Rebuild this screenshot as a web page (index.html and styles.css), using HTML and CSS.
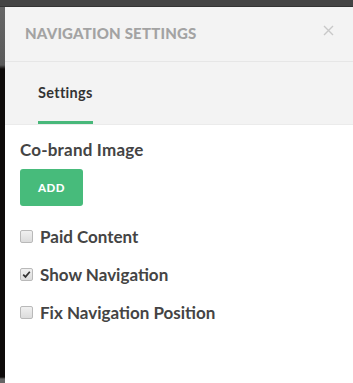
FILE: index.html
```html
<!DOCTYPE html>
<html>
<head>
<meta charset="utf-8">
<link rel="stylesheet" href="styles.css">
</head>
<body>
<div class="app">
  <div class="topbar"></div>
  <div class="main">
    <div class="side"></div>
    <div class="panel">
      <div class="header">
        <div class="title">NAVIGATION SETTINGS</div>
        <div class="close">
          <svg width="11" height="11" viewBox="0 0 11 11"><path d="M1 1L10 10M10 1L1 10" stroke="#c8c8c8" stroke-width="1.4" fill="none"/></svg>
        </div>
      </div>
      <div class="tabs">
        <div class="tab active">Settings</div>
      </div>
      <div class="content">
        <div class="label">Co-brand Image</div>
        <button class="add">ADD</button>
        <label class="check"><span class="box"></span><span>Paid Content</span></label>
        <label class="check"><span class="box checked"><svg width="9" height="9" viewBox="0 0 9 9"><path d="M1.2 4.6L3.5 6.9L7.8 1.8" stroke="#333" stroke-width="1.7" fill="none"/></svg></span><span>Show Navigation</span></label>
        <label class="check"><span class="box"></span><span>Fix Navigation Position</span></label>
      </div>
    </div>
  </div>
</div>
</body>
</html>
```
FILE: styles.css
```css
html, body {
  margin: 0;
  padding: 0;
  background: #111;
}
.app {
  width: 353px;
  height: 383px;
  display: flex;
  flex-direction: column;
  overflow: hidden;
  font-family: "Lato", "Open Sans", sans-serif;
}
.topbar {
  height: 7px;
  background: #444;
  border-bottom: 1px solid #333;
  box-sizing: border-box;
}
.main {
  flex: 1;
  display: flex;
}
.side {
  width: 5px;
  background: linear-gradient(#666 0, #5a5a5a 58px, #0e0b0a 62px, #0e0b0a 370px, #666 372px);
}
.panel {
  flex: 1;
  background: #fff;
  display: flex;
  flex-direction: column;
}
.header {
  height: 55px;
  background: #f3f3f3;
  border-bottom: 1px solid #e6e6e6;
  display: flex;
  align-items: center;
  justify-content: space-between;
  padding: 0 20px;
  box-sizing: border-box;
}
.title {
  font-weight: 900;
  font-size: 15px;
  color: #a3a3a3;
  letter-spacing: 0.2px;
  margin-top: -2px;
}
.close {
  display: flex;
  margin-right: -1px;
  margin-top: -7px;
}
.tabs {
  height: 63px;
  background: #f3f3f3;
  border-bottom: 1px solid #ebebeb;
  box-sizing: border-box;
  display: flex;
  padding-left: 33px;
}
.tab {
  font-weight: 700;
  font-size: 14.5px;
  letter-spacing: 0.3px;
  color: #333;
  display: flex;
  align-items: center;
  border-bottom: 3px solid transparent;
  padding-top: 1px;
}
.tab.active {
  border-bottom-color: #48b87a;
}
.content {
  padding: 15px 15px 0;
  display: flex;
  flex-direction: column;
  align-items: flex-start;
}
.label {
  font-weight: 700;
  font-size: 17px;
  letter-spacing: 0.2px;
  color: #444;
  line-height: 20px;
}
.add {
  margin-top: 9px;
  width: 63px;
  height: 37px;
  background: #47bb7b;
  border: none;
  border-radius: 3px;
  color: #fff;
  font-family: inherit;
  font-weight: 900;
  font-size: 11.5px;
  letter-spacing: 0.4px;
  padding: 0;
}
.check {
  display: flex;
  align-items: center;
  gap: 7px;
  font-weight: 700;
  font-size: 17px;
  color: #444;
  height: 20px;
  margin-top: 20px;
}
.check + .check {
  margin-top: 18px;
}
.box {
  width: 13px;
  height: 13px;
  box-sizing: border-box;
  border: 1px solid #b9b9b9;
  border-radius: 2px;
  background: linear-gradient(#f0f0f0, #dcdcdc);
  display: flex;
  align-items: center;
  justify-content: center;
}
```
